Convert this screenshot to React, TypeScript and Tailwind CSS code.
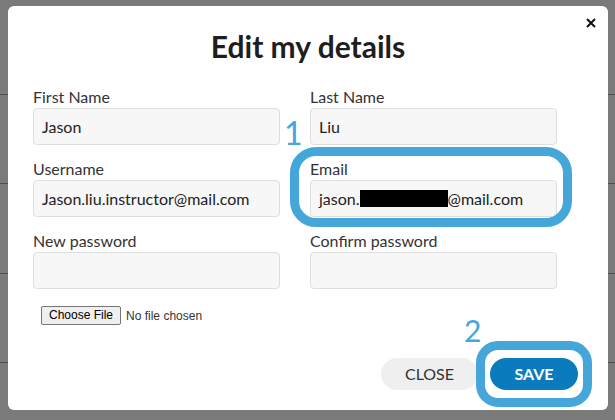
import React from "react";

const font = { fontFamily: "Lato, 'Open Sans', sans-serif" };

function Field({ label, value }: { label: string; value?: string }) {
  return (
    <div className="flex flex-col">
      <div className="h-[18px] text-[16px] leading-[18px] text-[#333] mb-[2px]">{label}</div>
      <div className="h-[37px] rounded-[4px] border border-[#dedede] bg-[#f7f7f7] px-[8px] flex items-center text-[16px] text-[#222]">
        {value}
      </div>
    </div>
  );
}

export default function App() {
  return (
    <div className="relative w-[615px] h-[420px] bg-[#7a7a7a] overflow-hidden pt-[6px] pl-[8px]" style={font}>
      <div className="absolute left-0 right-0 top-[94px] h-px bg-[#4f4f4f]" />
      <div className="absolute left-0 right-0 top-[183px] h-px bg-[#4f4f4f]" />
      <div className="absolute left-0 right-0 top-[273px] h-px bg-[#4f4f4f]" />
      <div className="absolute left-0 right-0 top-[362px] h-px bg-[#4f4f4f]" />
      <div className="relative w-[600px] h-[404px] bg-white rounded-[6px] flex flex-col">
        <button className="absolute left-[577px] top-[11px] w-[12px] h-[12px] flex items-center justify-center">
          <svg width="10" height="10" viewBox="0 0 10 10">
            <path d="M1 1L9 9M9 1L1 9" stroke="#111" strokeWidth="2" />
          </svg>
        </button>
        <h2 className="pt-[20px] h-[60px] text-center text-[30px] leading-[40px] font-bold text-[#1e1e1e]">
          Edit my details
        </h2>
        <div className="ml-[25px] mt-[22px] w-[524px] grid grid-cols-2 gap-x-[30px] gap-y-[15px]">
          <Field label="First Name" value="Jason" />
          <Field label="Last Name" value="Liu" />
          <Field label="Username" value="Jason.liu.instructor@mail.com" />
          <div className="flex flex-col">
            <div className="h-[18px] text-[16px] leading-[18px] text-[#333] mb-[2px]">Email</div>
            <div className="h-[37px] rounded-[4px] border border-[#dedede] bg-[#f7f7f7] px-[8px] flex items-center text-[16px] text-[#222]">
              jason.<span className="inline-block w-[88px] h-[17px] bg-black" />@mail.com
            </div>
          </div>
          <Field label="New password" />
          <Field label="Confirm password" />
        </div>
        <div className="ml-[33px] mt-[17px] flex items-center" style={{ fontFamily: "'Liberation Sans', Arial, sans-serif" }}>
          <span className="h-[19px] px-[7px] border border-[#767676] bg-[#efefef] rounded-[2px] text-[12px] leading-[17px] text-black">
            Choose File
          </span>
          <span className="ml-[5px] text-[12px] text-[#333]">No file chosen</span>
        </div>
        <div className="mt-auto mb-[20px] mr-[30px] flex justify-end gap-[12px]">
          <button className="h-[32px] w-[97px] rounded-full bg-[#efefef] text-[16px] text-[#333]">CLOSE</button>
          <button className="h-[32px] w-[88px] rounded-full bg-[#0a7cbd] text-[16px] font-bold text-white">SAVE</button>
        </div>

        <div className="absolute left-[282px] top-[141px] w-[282px] h-[80px] rounded-[26px] border-[9px] border-[#45a6d9]" />
        <div className="absolute left-[468px] top-[335px] w-[116px] h-[66px] rounded-[22px] border-[9px] border-[#45a6d9]" />
        <div className="absolute left-[276px] top-[111px] text-[32px] leading-[32px] font-normal text-[#45a6d9]">1</div>
        <div className="absolute left-[456px] top-[309px] text-[30px] leading-[30px] font-normal text-[#45a6d9]">2</div>
      </div>
    </div>
  );
}
